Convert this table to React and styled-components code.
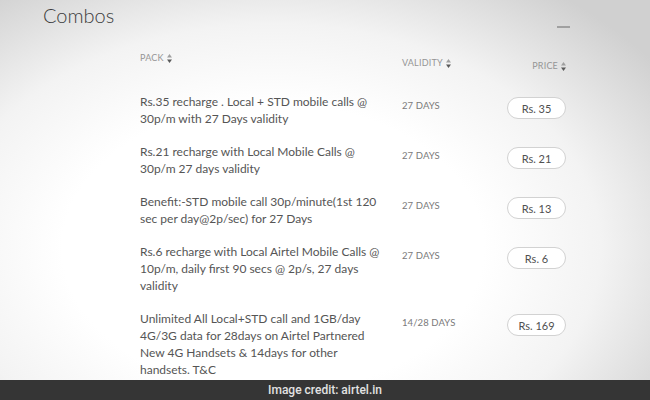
import { Fragment } from "react";
import styled, { createGlobalStyle } from "styled-components";

const GlobalStyle = createGlobalStyle`
  html, body {
    margin: 0;
    padding: 0;
  }
  body {
    font-family: Lato, "Open Sans", sans-serif;
  }
`;

const Page = styled.div`
  width: 650px;
  height: 400px;
  display: flex;
  flex-direction: column;
  overflow: hidden;
  background: radial-gradient(
    ellipse 72% 80% at 42% 62%,
    #ffffff 45%,
    #f3f3f3 70%,
    #d0d0d0 100%
  );
`;

const Panel = styled.div`
  flex: 1;
  overflow: hidden;
  padding: 0 80px 0 43px;
`;

const TitleBar = styled.div`
  height: 28px;
  padding-top: 1px;
  display: flex;
  justify-content: space-between;
`;

const Title = styled.h2`
  margin: 0;
  font-size: 20px;
  line-height: 28px;
  font-weight: 300;
  color: #3c3c3c;
`;

const Collapse = styled.span`
  align-self: flex-end;
  width: 13px;
  height: 2px;
  margin-bottom: 1px;
  background: #a0a0a0;
`;

const Table = styled.div`
  margin-left: 97px;
  width: 426px;
  padding-top: 22px;
`;

const columns = "262px 105px 59px";

const HeadRow = styled.div`
  display: grid;
  grid-template-columns: ${columns};
  align-items: start;
  height: 42px;
`;

const HeadCell = styled.div`
  display: flex;
  align-items: center;
  gap: 3px;
  padding-top: ${(p) => p.$drop || 0}px;
  justify-self: ${(p) => (p.$right ? "end" : "start")};
  font-size: 9px;
  line-height: 14px;
  letter-spacing: 0.2px;
  text-transform: uppercase;
  color: #959595;
`;

const Body = styled.div`
  display: grid;
  grid-template-columns: ${columns};
  row-gap: 16px;
  align-items: start;
`;

const Pack = styled.div`
  width: 240px;
  font-size: 12px;
  line-height: 17px;
  color: #555555;
`;

const Validity = styled.div`
  padding-top: 4px;
  font-size: 9.5px;
  line-height: 17px;
  letter-spacing: 0.1px;
  color: #7a7a7a;
`;

const PriceButton = styled.button`
  margin-top: 4px;
  width: 59px;
  height: 22px;
  padding: 0;
  border: 1px solid #d2d2d2;
  border-radius: 11px;
  background: #ffffff;
  font-family: Lato, "Open Sans", sans-serif;
  font-size: 11px;
  color: #505050;
  cursor: pointer;
`;

const CreditBar = styled.div`
  height: 20px;
  flex-shrink: 0;
  display: flex;
  align-items: center;
  justify-content: center;
  background: #353535;
  font-family: Roboto, "Liberation Sans", sans-serif;
  font-weight: 500;
  font-size: 12px;
  color: #e2e2e2;
`;

const SortIcon = () => (
  <svg width="5" height="9" viewBox="0 0 5 9">
    <polygon points="0,3.6 2.5,0 5,3.6" fill="#a0a0a0" />
    <polygon points="0,5.4 2.5,9 5,5.4" fill="#5a5a5a" />
  </svg>
);

const packs = [
  {
    text: "Rs.35 recharge . Local + STD mobile calls @ 30p/m with 27 Days validity",
    validity: "27 Days",
    price: 35,
  },
  {
    text: "Rs.21 recharge with Local Mobile Calls @ 30p/m 27 days validity",
    validity: "27 Days",
    price: 21,
  },
  {
    text: "Benefit:-STD mobile call 30p/minute(1st 120 sec per day@2p/sec) for 27 Days",
    validity: "27 Days",
    price: 13,
  },
  {
    text: "Rs.6 recharge with Local Airtel Mobile Calls @ 10p/m, daily first 90 secs @ 2p/s, 27 days validity",
    validity: "27 Days",
    price: 6,
  },
  {
    text: "Unlimited All Local+STD call and 1GB/day 4G/3G data for 28days on Airtel Partnered New 4G Handsets & 14days for other handsets. T&C",
    validity: "14/28 Days",
    price: 169,
  },
];

const App = () => {
  return (
    <Page>
      <GlobalStyle />
      <Panel>
        <TitleBar>
          <Title>Combos</Title>
          <Collapse />
        </TitleBar>
        <Table>
          <HeadRow>
            <HeadCell>
              Pack <SortIcon />
            </HeadCell>
            <HeadCell $drop={5}>
              Validity <SortIcon />
            </HeadCell>
            <HeadCell $drop={8} $right>
              Price <SortIcon />
            </HeadCell>
          </HeadRow>
          <Body>
            {packs.map((pack, index) => (
              <Fragment key={index}>
                <Pack>{pack.text}</Pack>
                <Validity>{pack.validity.toUpperCase()}</Validity>
                <PriceButton>Rs. {pack.price}</PriceButton>
              </Fragment>
            ))}
          </Body>
        </Table>
      </Panel>
      <CreditBar>Image credit: airtel.in</CreditBar>
    </Page>
  );
};

export default App;
